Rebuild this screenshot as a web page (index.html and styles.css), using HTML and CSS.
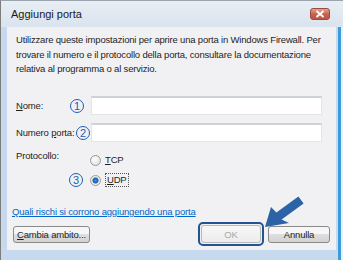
FILE: index.html
```html
<!DOCTYPE html>
<html lang="it">
<head>
  <meta charset="UTF-8">
  <title>Aggiungi porta</title>
  <link rel="stylesheet" href="styles.css">
</head>
<body>
  <div class="window">
    <div class="titlebar">
      <span class="title">Aggiungi porta</span>
      <span class="close">
        <svg width="10" height="8" viewBox="0 0 10 8">
          <path d="M1.5 1 L8.5 7 M8.5 1 L1.5 7" stroke="#fff" stroke-width="2"/>
        </svg>
      </span>
    </div>

    <div class="content">
      <p class="intro">Utilizzare queste impostazioni per aprire una porta in Windows Firewall. Per trovare il numero e il protocollo della porta, consultare la documentazione relativa al programma o al servizio.</p>

      <div class="form">
        <div class="row">
          <div class="label"><span><u>N</u>ome:</span><span class="num num-nome">1</span></div>
          <input class="field" type="text">
        </div>
        <div class="row">
          <div class="label"><span>Numero <u>p</u>orta:</span><span class="num num-porta">2</span></div>
          <input class="field" type="text">
        </div>
        <div class="row-proto">
          <div class="label">Protocollo:</div>
          <div class="radio"><span class="dot"></span><span><u>T</u>CP</span></div>
        </div>
        <div class="row-udp">
          <div class="label"><span class="num num-udp">3</span></div>
          <div class="radio"><span class="dot on"></span><span class="focus"><u>U</u>DP</span></div>
        </div>
      </div>

      <a class="link" href="#">Quali rischi si corrono aggiungendo una porta</a>

      <div class="buttons">
        <button class="btn btn-scope"><u>C</u>ambia ambito...</button>
        <span class="spacer"></span>
        <span class="ring"><button class="btn btn-ok" disabled>OK</button></span>
        <button class="btn btn-cancel">Annulla</button>
      </div>

      <svg class="arrow" width="44" height="36" viewBox="0 0 44 36">
        <path d="M3 33 L9 13 L14.4 18.4 L36.4 2.4 L41.6 9.6 L19.6 25.6 L27 29 Z" fill="#2b63a6"/>
      </svg>
    </div>
  </div>
</body>
</html>
```

FILE: styles.css
```css
body {
  margin: 0;
  font-family: 'Liberation Sans', Arial, sans-serif;
  font-size: 9.5px;
  letter-spacing: -0.18px;
  color: #1e1e1e;
}
.window {
  position: relative;
  width: 343px;
  height: 260px;
  box-sizing: border-box;
  display: flex;
  flex-direction: column;
  background: #c6d9ee;
  border-left: 1px solid #7d7d7d;
  border-top: 1px solid #9aa4ae;
  box-shadow: inset -2px 0 #e6f0f9, inset -5px 0 #3f9bd6;
  overflow: hidden;
}
.titlebar {
  flex-shrink: 0;
  height: 26px;
  display: flex;
  align-items: center;
  padding: 0 13px 0 10px;
  background: linear-gradient(#e8eef4, #dae4ee);
}
.title {
  flex: 1;
  font-size: 11px;
  letter-spacing: 0;
  color: #1a1a1a;
}
.close {
  width: 18px;
  height: 10px;
  display: flex;
  align-items: center;
  justify-content: center;
  border: 1px solid #9a4a3e;
  border-radius: 3px;
  background: linear-gradient(#e0a196, #c8604f 55%, #bf5543);
}
.content {
  position: relative;
  flex: 1;
  min-height: 0;
  margin: 0 7px 10px 6px;
  padding: 0 6px 0 9px;
  background: #f1f1f3;
}
.intro {
  margin: 6px 0 0;
  line-height: 14.5px;
}
.form {
  margin-top: 19.5px;
}
.row {
  display: flex;
  align-items: center;
  height: 19px;
  margin-bottom: 8px;
}
.label {
  width: 75px;
  flex-shrink: 0;
  display: flex;
  align-items: center;
  white-space: nowrap;
}
.field {
  width: 231px;
  height: 19px;
  box-sizing: border-box;
  margin: 0;
  border: 1px solid #e4e4e8;
  border-top: 2px solid #cdd1d8;
  background: #fff;
}
.num {
  width: 12px;
  height: 12px;
  margin-left: auto;
  border: 1px solid #1d5fb8;
  border-radius: 50%;
  color: #1d5fb8;
  font-size: 11px;
  letter-spacing: 0;
  line-height: 12px;
  text-align: center;
}
.num-nome { margin-right: 7px; }
.num-porta { margin-right: 1px; }
.num-udp { margin-right: 8px; }
.row-proto {
  display: flex;
  align-items: flex-start;
  height: 20px;
  margin-top: 4px;
  line-height: 12px;
}
.row-proto .radio { margin-top: 4px; }
.row-udp {
  display: flex;
  align-items: center;
  height: 14px;
  margin-top: 3px;
  line-height: 12px;
}
.radio {
  display: flex;
  align-items: center;
  margin-left: -1px;
}
.dot {
  width: 9px;
  height: 9px;
  margin-right: 4px;
  border: 1px solid #9a9a9a;
  border-radius: 50%;
  background: radial-gradient(circle at 40% 35%, #fff, #d8d8d8);
}
.dot.on {
  background: radial-gradient(circle, #3d8fe0 0, #1b5fb0 2.5px, #e9e9e9 3.5px, #fff);
}
.focus {
  border: 1px dotted #555;
  padding: 0 1px;
}
.link {
  display: block;
  margin: 19px 0 0 -4px;
  line-height: 12px;
  color: #0066cc;
}
.buttons {
  display: flex;
  align-items: center;
  margin: 4px 0 0 -3px;
}
.spacer { flex: 1; }
.btn {
  height: 17px;
  padding: 0;
  font-family: inherit;
  font-size: 9.5px;
  letter-spacing: -0.18px;
  white-space: nowrap;
  color: #1e1e1e;
  border: 1px solid #8a8a8a;
  border-radius: 3px;
  background: linear-gradient(#f6f6f6 45%, #dedede 50%, #d2d2d2);
}
.btn-scope { width: 77px; }
.ring {
  padding: 1px;
  border: 2px solid #235491;
  border-radius: 5px;
  margin-right: 4px;
}
.btn-ok {
  display: block;
  width: 60px;
  height: 18px;
  color: #a8a8a8;
  border-color: #b9b9b9;
  background: linear-gradient(#f7f7f7, #ececec);
}
.btn-cancel { width: 62px; }
.arrow {
  position: absolute;
  left: 255px;
  top: 167px;
}
```
